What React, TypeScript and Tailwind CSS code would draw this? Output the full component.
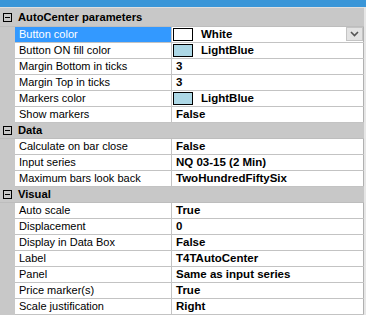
import React from "react";

type Row = {
  label: string;
  value: string;
  swatch?: string;
  selected?: boolean;
  dropdown?: boolean;
};

type Section = { title: string; rows: Row[]; first?: boolean };

const sections: Section[] = [
  {
    title: "AutoCenter parameters",
    first: true,
    rows: [
      { label: "Button color", value: "White", swatch: "#ffffff", selected: true, dropdown: true },
      { label: "Button ON fill color", value: "LightBlue", swatch: "#add8e6" },
      { label: "Margin Bottom in ticks", value: "3" },
      { label: "Margin Top in ticks", value: "3" },
      { label: "Markers color", value: "LightBlue", swatch: "#add8e6" },
      { label: "Show markers", value: "False" },
    ],
  },
  {
    title: "Data",
    rows: [
      { label: "Calculate on bar close", value: "False" },
      { label: "Input series", value: "NQ 03-15 (2 Min)" },
      { label: "Maximum bars look back", value: "TwoHundredFiftySix" },
    ],
  },
  {
    title: "Visual",
    rows: [
      { label: "Auto scale", value: "True" },
      { label: "Displacement", value: "0" },
      { label: "Display in Data Box", value: "False" },
      { label: "Label", value: "T4TAutoCenter" },
      { label: "Panel", value: "Same as input series" },
      { label: "Price marker(s)", value: "True" },
      { label: "Scale justification", value: "Right" },
    ],
  },
];

function MinusBox() {
  return (
    <div className="ml-[3px] flex h-[9px] w-[9px] shrink-0 items-center justify-center border border-black">
      <div className="h-px w-[5px] bg-black" />
    </div>
  );
}

function Header({ title, first }: { title: string; first?: boolean }) {
  return (
    <div
      className={`flex items-center border-b border-[#bdbdbd] bg-[#c8c8c8] ${
        first ? "h-[19px]" : "h-[16px]"
      }`}
    >
      <MinusBox />
      <span className="ml-[6px] text-[11.2px] font-bold leading-[15px]">{title}</span>
    </div>
  );
}

function PropRow({ row }: { row: Row }) {
  return (
    <div className="flex h-[16px]">
      <div className="w-[15px] shrink-0 bg-[#c8c8c8]" />
      <div className="flex flex-1 border-b border-[#c3c3c3]">
        <div
          className={`w-[157px] shrink-0 border-r border-[#c3c3c3] pl-[4px] leading-[15px] whitespace-nowrap ${
            row.selected ? "bg-[#3399ff] text-white" : "bg-white text-black"
          }`}
        >
          {row.label}
        </div>
        <div
          className={`flex flex-1 items-center border-r border-[#b0b0b0] bg-white ${
            row.swatch ? "pl-[1px]" : "pl-[4px]"
          }`}
        >
          {row.swatch && (
            <div
              className="h-[13px] w-[20px] shrink-0 border border-black"
              style={{ backgroundColor: row.swatch }}
            />
          )}
          <span
            className={`whitespace-nowrap text-[11.5px] font-bold leading-[15px] ${
              row.swatch ? "ml-[8px]" : ""
            }`}
          >
            {row.value}
          </span>
          {row.dropdown && (
            <div className="ml-auto flex h-[14px] w-[17px] items-center justify-center self-start border border-[#c4c4c4] bg-[#e3e3e3]">
              <svg width="9" height="6" viewBox="0 0 9 6">
                <polyline
                  points="1,1 4.5,4.5 8,1"
                  fill="none"
                  stroke="#555555"
                  strokeWidth="1.6"
                />
              </svg>
            </div>
          )}
        </div>
      </div>
    </div>
  );
}

export default function App() {
  return (
    <div className="h-[316px] w-[366px] overflow-hidden bg-white font-['Liberation_Sans',Arial,sans-serif] text-[11px] text-black">
      <div className="h-[7px] bg-[#3a96d8]" />
      <div className="flex">
        <div className="w-[364px]">
          <div className="h-px bg-[#e0e0e0]" />
          {sections.map((s) => (
            <div key={s.title}>
              <Header title={s.title} first={s.first} />
              {s.rows.map((r) => (
                <PropRow key={r.label} row={r} />
              ))}
            </div>
          ))}
        </div>
        <div className="w-[2px] bg-[#e6e6e6]" />
      </div>
    </div>
  );
}
